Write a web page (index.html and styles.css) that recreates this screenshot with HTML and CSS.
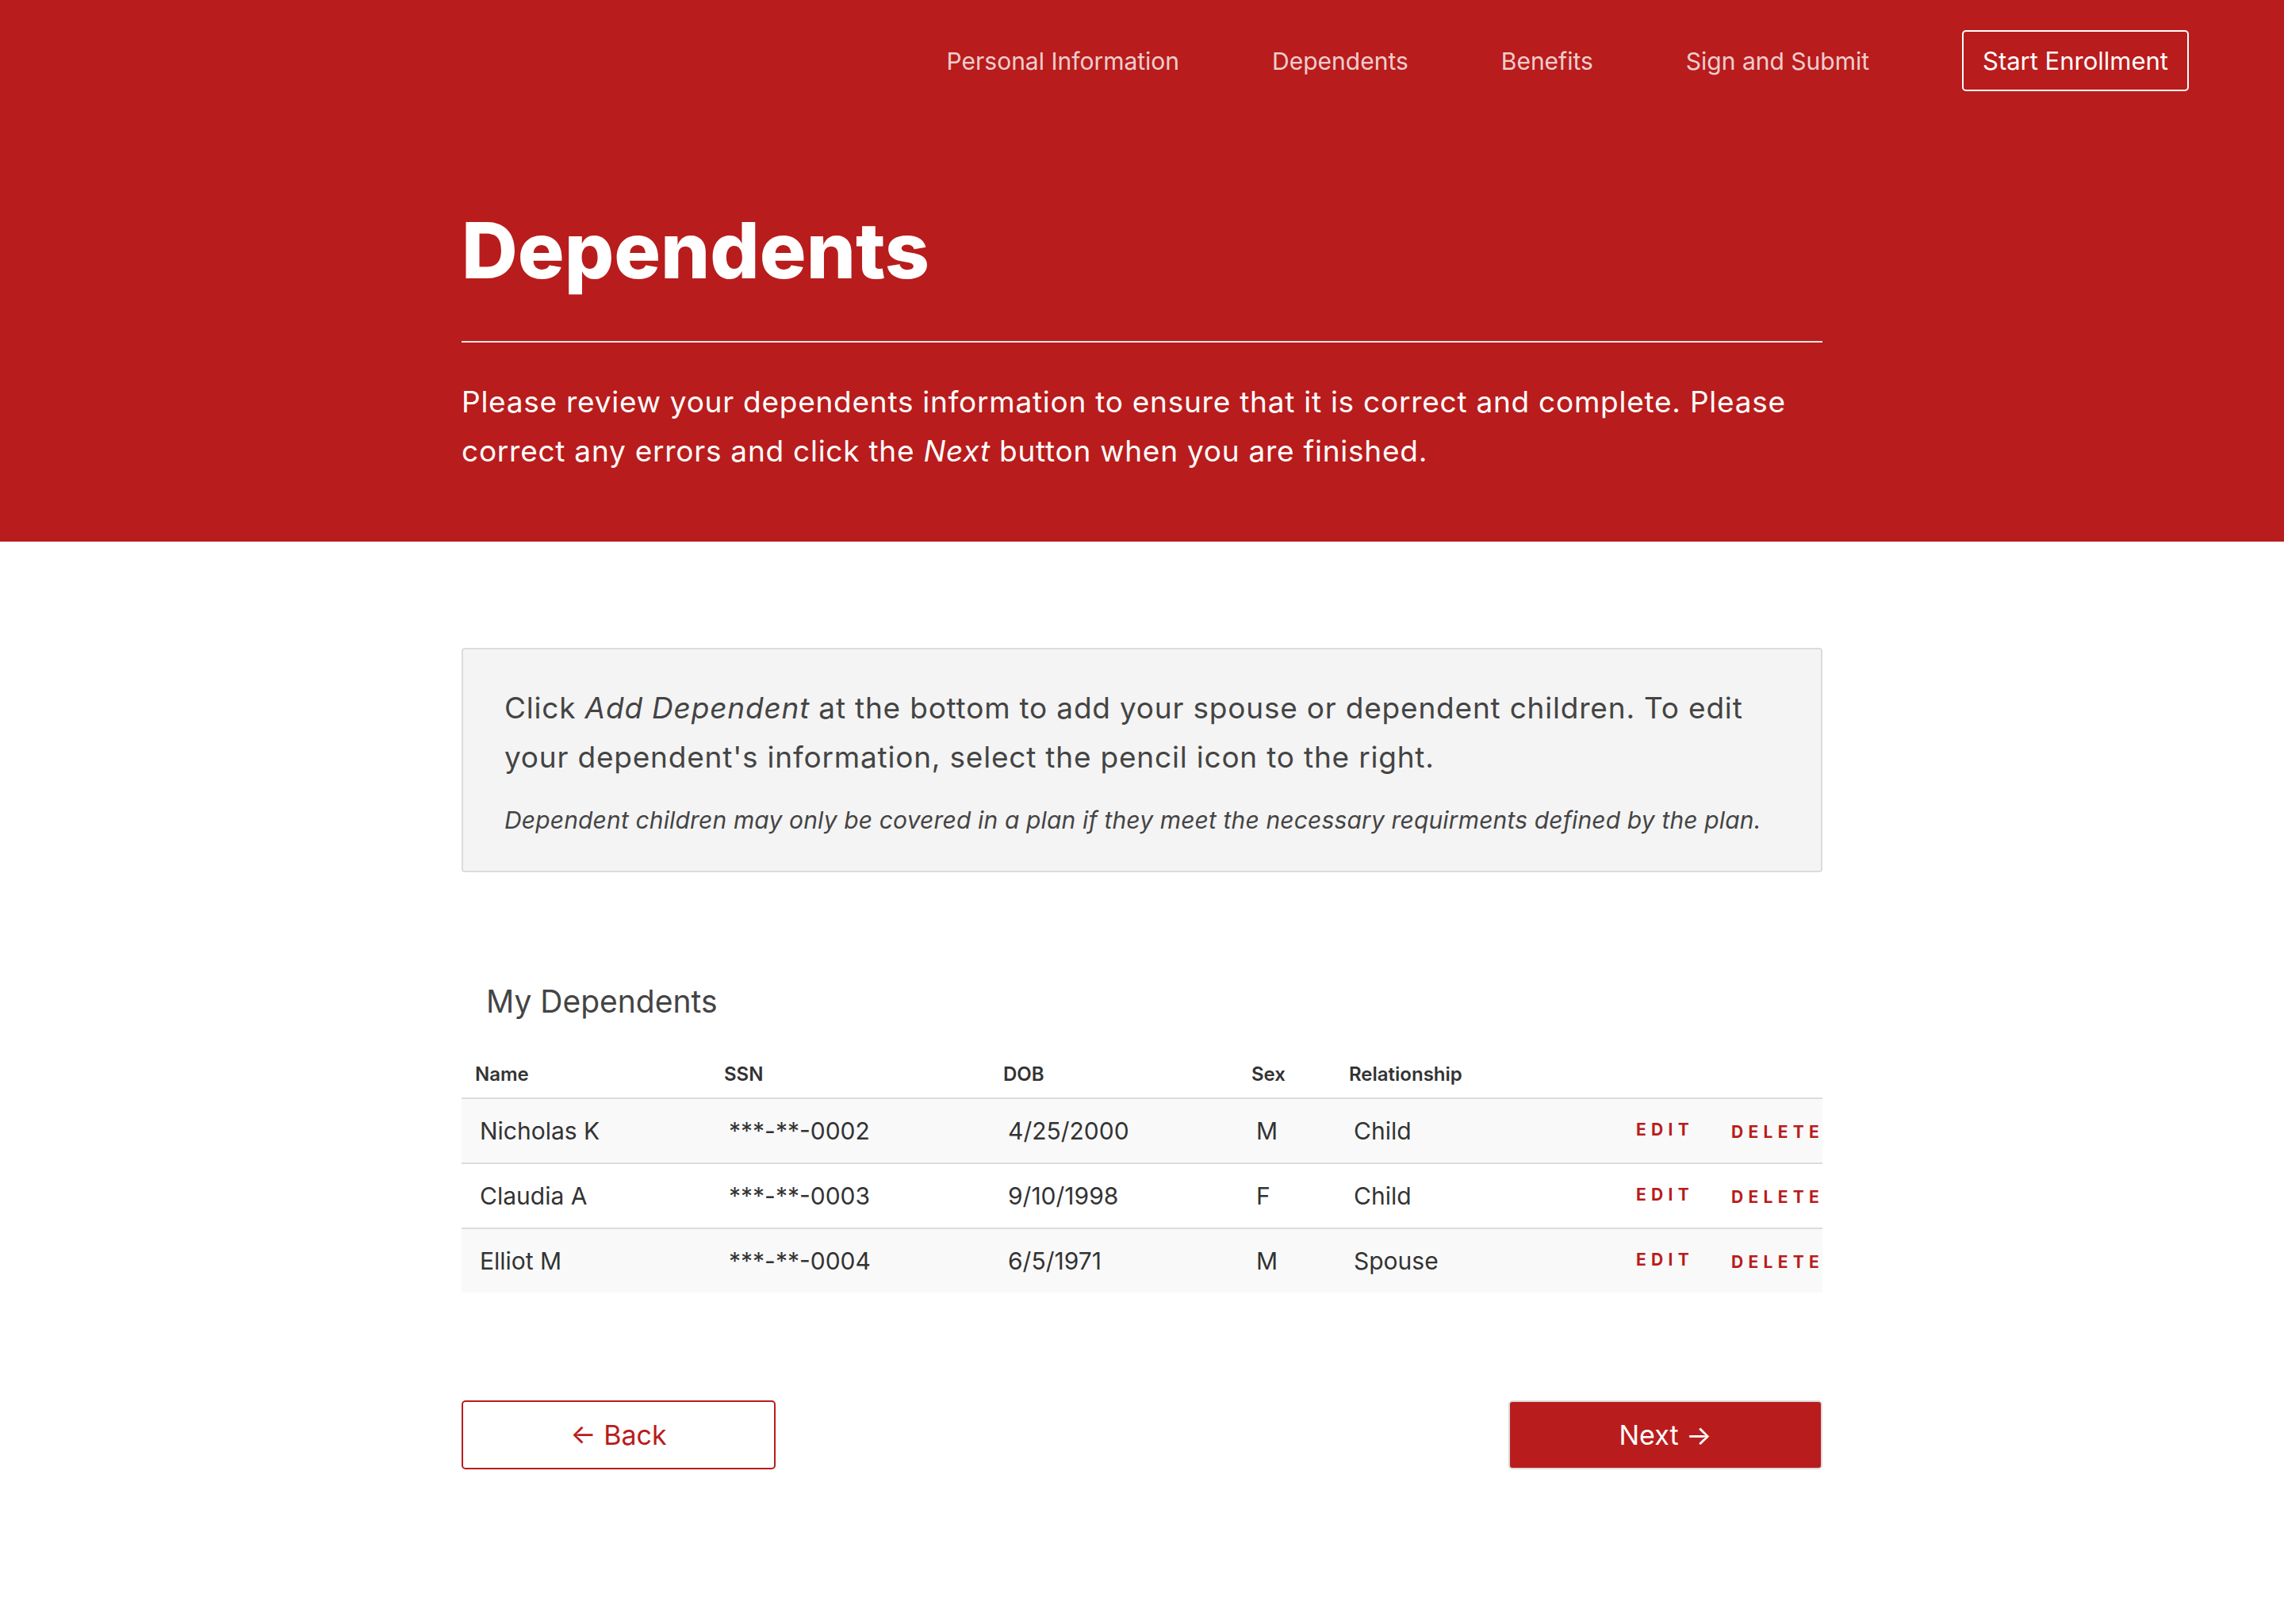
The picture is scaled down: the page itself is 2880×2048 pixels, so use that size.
FILE: index.html
```html
<!DOCTYPE html>
<html lang="en">
<head>
    <meta charset="UTF-8">
    <meta name="viewport" content="width=device-width, initial-scale=1.0">
    <title>Dependents</title>
    <link rel="stylesheet" href="styles.css">
</head>
<body>
    <header class="hero">
        <nav class="topnav">
            <a href="#" class="nav-link">Personal Information</a>
            <a href="#" class="nav-link">Dependents</a>
            <a href="#" class="nav-link">Benefits</a>
            <a href="#" class="nav-link">Sign and Submit</a>
            <a href="#" class="nav-button">Start Enrollment</a>
        </nav>

        <div class="hero-content">
            <h1>Dependents</h1>
            <hr class="divider">
            <p class="intro">Please review your dependents information to ensure that it is correct and complete. Please correct any errors and click the <em>Next</em> button when you are finished.</p>
        </div>
    </header>

    <main class="content">
        <section class="notice">
            <p class="notice-text">Click <em>Add Dependent</em> at the bottom to add your spouse or dependent children. To edit your dependent's information, select the pencil icon to the right.</p>
            <p class="notice-note">Dependent children may only be covered in a plan if they meet the necessary requirments defined by the plan.</p>
        </section>

        <section class="dependents">
            <h2>My Dependents</h2>
            <table class="dep-table">
                <colgroup>
                    <col class="col-name">
                    <col class="col-ssn">
                    <col class="col-dob">
                    <col class="col-sex">
                    <col class="col-rel">
                    <col class="col-edit">
                    <col class="col-delete">
                </colgroup>
                <thead>
                    <tr>
                        <th>Name</th>
                        <th>SSN</th>
                        <th>DOB</th>
                        <th>Sex</th>
                        <th>Relationship</th>
                        <th></th>
                        <th></th>
                    </tr>
                </thead>
                <tbody>
                    <tr>
                        <td>Nicholas K</td>
                        <td>***-**-0002</td>
                        <td>4/25/2000</td>
                        <td>M</td>
                        <td>Child</td>
                        <td class="act act-edit"><a href="#">Edit</a></td>
                        <td class="act act-delete"><a href="#">Delete</a></td>
                    </tr>
                    <tr>
                        <td>Claudia A</td>
                        <td>***-**-0003</td>
                        <td>9/10/1998</td>
                        <td>F</td>
                        <td>Child</td>
                        <td class="act act-edit"><a href="#">Edit</a></td>
                        <td class="act act-delete"><a href="#">Delete</a></td>
                    </tr>
                    <tr>
                        <td>Elliot M</td>
                        <td>***-**-0004</td>
                        <td>6/5/1971</td>
                        <td>M</td>
                        <td>Spouse</td>
                        <td class="act act-edit"><a href="#">Edit</a></td>
                        <td class="act act-delete"><a href="#">Delete</a></td>
                    </tr>
                </tbody>
            </table>
        </section>

        <div class="actions">
            <a href="#" class="btn btn-outline">&larr; Back</a>
            <a href="#" class="btn btn-solid">Next &rarr;</a>
        </div>
    </main>
</body>
</html>
```

FILE: styles.css
```css
/* Base */
body {
    font-family: Inter, "Noto Sans", sans-serif;
    margin: 0;
    padding: 0;
    color: #333;
    background: #fff;
}
a {
    text-decoration: none;
}

/* Red header */
.hero {
    background-color: #b91c1c;
    color: #fff;
    padding-bottom: 83px;
}
.topnav {
    display: flex;
    justify-content: flex-end;
    align-items: center;
    gap: 117px;
    padding: 38px 120px 0;
}
.nav-link {
    color: rgba(255, 255, 255, 0.8);
    font-size: 30px;
}
.nav-button {
    color: #fff;
    font-size: 31px;
    line-height: 37px;
    padding: 18px 24px;
    border: 2px solid #fff;
    border-radius: 5px;
}
.hero-content {
    width: 1716px;
    margin: 0 auto;
}
.hero h1 {
    font-size: 98px;
    font-weight: 800;
    line-height: 115px;
    margin: 143px 0 57px;
}
.divider {
    border: 0;
    border-top: 2px solid #e6e6e6;
    margin: 0;
}
.intro {
    font-size: 37px;
    line-height: 62px;
    letter-spacing: 0.75px;
    margin: 44px 0 0;
}

/* Main */
.content {
    width: 1716px;
    margin: 0 auto;
    padding-top: 134px;
}
.notice {
    background-color: #f4f4f4;
    border: 2px solid #dcdcdc;
    border-radius: 4px;
    padding: 43px 52px 42px;
    color: #444;
}
.notice-text {
    font-size: 37px;
    line-height: 62px;
    letter-spacing: 0.8px;
    margin: 0;
}
.notice-note {
    font-size: 30px;
    line-height: 44px;
    letter-spacing: 0.15px;
    font-style: italic;
    margin: 26px 0 0;
}

.dependents h2 {
    font-size: 39px;
    font-weight: 400;
    line-height: 48px;
    color: #444;
    margin: 139px 0 53px;
    padding-left: 31px;
}
.dep-table {
    width: 100%;
    table-layout: fixed;
    border-collapse: collapse;
}
.col-name { width: 314px; }
.col-ssn { width: 352px; }
.col-dob { width: 313px; }
.col-sex { width: 123px; }
.col-rel { width: 356px; }
.col-edit { width: 120px; }
.col-delete { width: 138px; }
.dep-table th {
    text-align: left;
    font-size: 24px;
    font-weight: 600;
    line-height: 30px;
    color: #333;
    padding: 0 0 14px 17px;
    border-bottom: 2px solid #dcdcdc;
}
.dep-table td {
    font-size: 30px;
    line-height: 40px;
    color: #333;
    height: 80px;
    padding: 0 0 0 23px;
    vertical-align: middle;
    white-space: nowrap;
}
.dep-table tbody tr:nth-child(odd) {
    background-color: #f9f9f9;
}
.dep-table tbody tr + tr {
    border-top: 2px solid #dcdcdc;
}
.act a {
    color: #b91c1c;
    font-size: 21px;
    font-weight: 700;
    text-transform: uppercase;
    letter-spacing: 0.3em;
}
.act-edit a {
    display: inline-block;
    line-height: 30px;
    margin-bottom: 12px;
}

/* Bottom buttons */
.actions {
    display: flex;
    justify-content: space-between;
    margin-top: 136px;
    padding-bottom: 120px;
}
.btn {
    width: 396px;
    height: 87px;
    box-sizing: border-box;
    display: flex;
    align-items: center;
    justify-content: center;
    font-size: 34px;
    border-radius: 5px;
}
.btn-outline {
    color: #b91c1c;
    border: 2px solid #b91c1c;
    background: #fff;
}
.btn-solid {
    color: #fff;
    background: #b91c1c;
    border: 2px solid #dcdcdc;
}
```
